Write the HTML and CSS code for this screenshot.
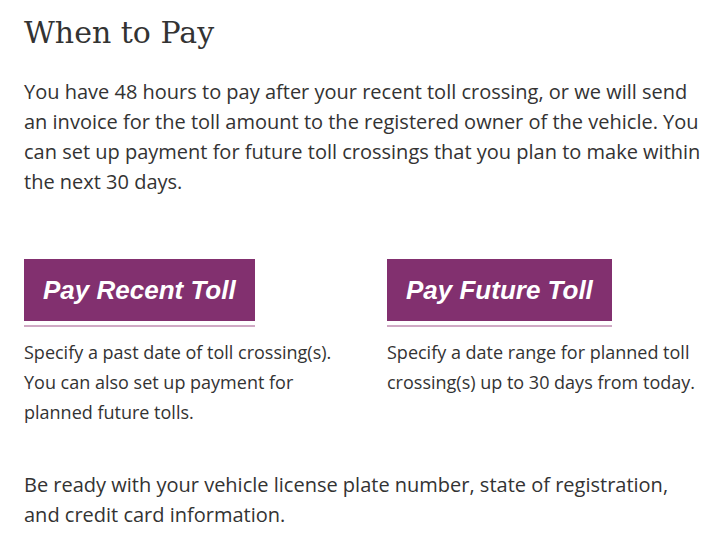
FILE: index.html
```html
<!DOCTYPE html>
<html lang="en">
<head>
    <meta charset="UTF-8">
    <meta name="viewport" content="width=device-width, initial-scale=1.0">
    <title>When to Pay</title>
    <link rel="stylesheet" href="styles.css">
</head>
<body>
    <div class="pay-section">
        <h2 class="pay-title">When to Pay</h2>
        <p class="pay-intro">You have 48 hours to pay after your recent toll crossing, or we will send an invoice for the toll amount to the registered owner of the vehicle. You can set up payment for future toll crossings that you plan to make within the next 30 days.</p>
        <div class="pay-options">
            <div class="pay-option">
                <a href="#" class="pay-button">Pay Recent Toll</a>
                <p class="pay-note">Specify a past date of toll crossing(s). You can also set up payment for planned future tolls.</p>
            </div>
            <div class="pay-option">
                <a href="#" class="pay-button">Pay Future Toll</a>
                <p class="pay-note">Specify a date range for planned toll crossing(s) up to 30 days from today.</p>
            </div>
        </div>
        <p class="pay-ready">Be ready with your vehicle license plate number, state of registration, and credit card information.</p>
    </div>
</body>
</html>
```

FILE: styles.css
```css
body {
    margin: 0;
    background: #fff;
    color: #333;
    font-family: "Open Sans", "Liberation Sans", Arial, sans-serif;
}
.pay-section {
    padding: 13px 10px 0 24px;
}
.pay-title {
    margin: 0;
    font-family: "DejaVu Serif", serif;
    font-weight: normal;
    font-size: 30px;
    line-height: 40px;
    color: #333;
}
.pay-intro {
    margin: 24px 0 0 0;
    font-size: 20px;
    line-height: 30px;
}
.pay-options {
    display: grid;
    grid-template-columns: 1fr 1fr;
    column-gap: 40px;
    margin-top: 62px;
}
.pay-button {
    display: inline-block;
    padding: 0 19px;
    height: 62px;
    line-height: 62px;
    background-color: #82306f;
    color: #fff;
    font-family: "Liberation Sans", Arial, sans-serif;
    font-size: 26px;
    font-weight: bold;
    font-style: italic;
    text-decoration: none;
    box-shadow: 0 4px 0 #fff, 0 6px 0 #cfa9c4;
}
.pay-note {
    margin: 16px 0 0 0;
    font-size: 18px;
    line-height: 30px;
}
.pay-ready {
    max-width: 672px;
    margin: 43px 0 0 0;
    font-size: 20px;
    line-height: 30px;
}
```
